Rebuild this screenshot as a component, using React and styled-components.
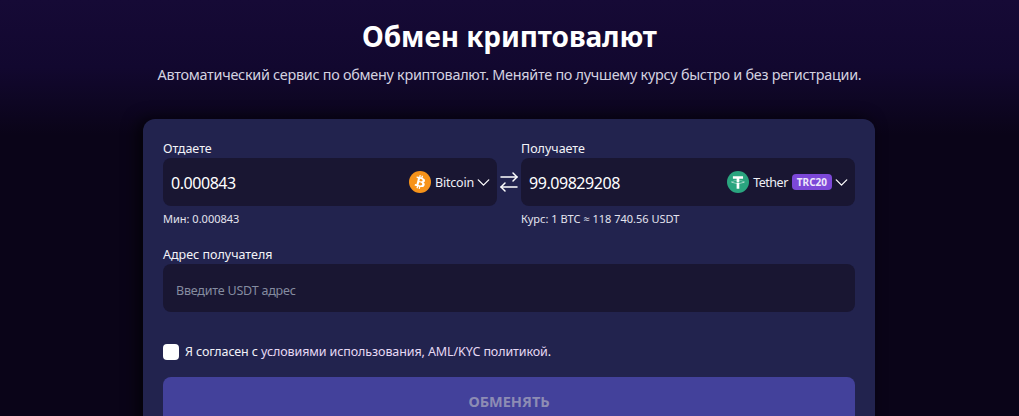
import React from "react"
import styled, { createGlobalStyle } from "styled-components"
import { ArrowRightLeft, ChevronDown } from "lucide-react"

const GlobalStyle = createGlobalStyle`
  html, body {
    margin: 0;
    padding: 0;
    background: #0a0418;
    overflow: hidden;
  }
  * {
    box-sizing: border-box;
  }
`

const Page = styled.main`
  height: 416px;
  overflow: hidden;
  padding-top: 17px;
  font-family: "Noto Sans", "Open Sans", sans-serif;
  color: #fff;
  background: linear-gradient(180deg, #160a36 0%, #12082f 50%, #0a0418 100%) no-repeat;
  background-size: 100% 135px;
`
const Title = styled.h1`
  margin: 0;
  font-size: 28px;
  line-height: 38px;
  font-weight: 700;
  letter-spacing: -0.1px;
  text-align: center;
`
const Subtitle = styled.p`
  margin: 9px 0 0;
  font-size: 14.4px;
  line-height: 22px;
  letter-spacing: -0.27px;
  color: #d4d2e0;
  text-align: center;
`
const Card = styled.section`
  width: 732px;
  margin: 33px 0 0 143px;
  padding: 20px;
  border-radius: 12px;
  background: #22234e;
  box-shadow: -5px 0 16px rgba(0, 0, 0, 0.7);
`
const ExchangeRow = styled.div`
  display: grid;
  grid-template-columns: 334px 24px 334px;
`
const Label = styled.label`
  display: block;
  font-size: 12.5px;
  line-height: ${(p) => (p.$compact ? "18px" : "19px")};
  color: #f3f3f8;
`
const Field = styled.div`
  height: 48px;
  display: flex;
  align-items: center;
  padding: 0 3px 0 8px;
  border-radius: 8px;
  background: #191632;
`
const Amount = styled.span`
  flex: 1;
  padding-top: 1px;
  font-size: 16px;
  letter-spacing: -0.45px;
  color: #fff;
`
const CoinName = styled.span`
  margin-left: 4px;
  font-size: 12.5px;
  letter-spacing: ${(p) => (p.$tight ? "-0.5px" : "-0.2px")};
  color: #f0f0f6;
`
const Badge = styled.span`
  margin-left: 4px;
  padding: 0 5px;
  height: 16px;
  display: flex;
  align-items: center;
  border-radius: 4px;
  background: #7c48d8;
  font-size: 10px;
  font-weight: 700;
  color: #ece6fa;
`
const Chevron = styled(ChevronDown)`
  margin-left: -1px;
  color: #fff;
`
const Hint = styled.div`
  margin-top: 4px;
  font-size: 11px;
  line-height: 18px;
  color: #e4e4ee;
`
const SwapButton = styled.div`
  height: 48px;
  margin-top: 19px;
  display: flex;
  align-items: center;
  justify-content: center;
  color: #fff;
`
const AddressBlock = styled.div`
  margin-top: 18px;
`
const AddressInput = styled.div`
  height: 48px;
  display: flex;
  align-items: center;
  padding: 4px 13px 0;
  border-radius: 8px;
  background: #191632;
  font-size: 12.5px;
  letter-spacing: -0.2px;
  color: #858ca0;
`
const Agreement = styled.div`
  margin-top: 32px;
  display: flex;
  align-items: center;
  gap: 6px;
  font-size: 12.5px;
  line-height: 16px;
  letter-spacing: -0.1px;
  color: #f0f0f6;
`
const Checkbox = styled.span`
  width: 16px;
  height: 16px;
  border-radius: 4px;
  background: #fff;
`
const TermsLink = styled.span`
  color: #e6d9f4;
`
const SubmitButton = styled.div`
  margin-top: 17px;
  height: 48px;
  display: flex;
  align-items: center;
  justify-content: center;
  border-radius: 8px;
  background: #43419b;
  font-size: 14.5px;
  font-weight: 700;
  color: #8d8cb4;
`

function BitcoinIcon() {
  return (
    <svg width="22" height="22" viewBox="0 0 32 32" aria-hidden="true">
      <circle cx="16" cy="16" r="16" fill="#f7931a" />
      <path
        fill="#fff"
        d="M23.19 14.02c.31-2.12-1.3-3.26-3.5-4.02l.72-2.87-1.75-.44-.69 2.8c-.46-.12-.93-.22-1.4-.33l.7-2.81-1.75-.44-.71 2.87c-.38-.09-.75-.17-1.12-.26l-2.41-.6-.46 1.87s1.3.3 1.27.31c.71.18.84.65.82 1.02l-.82 3.27-1.14 4.59c-.09.21-.31.53-.8.41.02.03-1.27-.32-1.27-.32l-.87 2 2.28.57c.42.11.84.22 1.25.32l-.72 2.9 1.75.44.72-2.87c.48.13.94.25 1.39.36l-.71 2.86 1.75.44.72-2.9c2.99.57 5.24.34 6.18-2.36.76-2.18-.04-3.43-1.61-4.25 1.15-.26 2.01-1.02 2.24-2.57zm-4 5.62c-.54 2.18-4.2 1-5.39.7l.96-3.86c1.19.3 4.99.88 4.43 3.16zm.54-5.65c-.49 1.98-3.54.97-4.53.73l.87-3.5c.99.25 4.18.71 3.66 2.77z"
      />
    </svg>
  )
}

function TetherIcon() {
  return (
    <svg width="22" height="22" viewBox="0 0 32 32" aria-hidden="true">
      <circle cx="16" cy="16" r="16" fill="#2aa57f" />
      <path
        fill="#fff"
        d="M17.92 17.38v-.01c-.11.01-.68.04-1.95.04-1.01 0-1.73-.03-1.98-.04v.01c-3.89-.17-6.79-.85-6.79-1.66s2.9-1.49 6.79-1.66v2.65c.25.02.98.06 1.99.06 1.21 0 1.82-.05 1.94-.06v-2.65c3.88.17 6.77.85 6.77 1.66s-2.89 1.49-6.77 1.66m0-3.59V11.4h5.41V7.8H8.59v3.6h5.4v2.39c-4.4.2-7.7 1.07-7.7 2.11s3.3 1.91 7.7 2.11v7.67h3.93v-7.67c4.39-.2 7.69-1.07 7.69-2.11s-3.3-1.91-7.69-2.11"
      />
    </svg>
  )
}

export default function App() {
  return (
    <Page>
      <GlobalStyle />
      <Title>Обмен криптовалют</Title>
      <Subtitle>
        Автоматический сервис по обмену криптовалют. Меняйте по лучшему курсу быстро и без регистрации.
      </Subtitle>
      <Card>
        <ExchangeRow>
          <div>
            <Label>Отдаете</Label>
            <Field>
              <Amount>0.000843</Amount>
              <BitcoinIcon />
              <CoinName>Bitcoin</CoinName>
              <Chevron size={21} strokeWidth={1.5} />
            </Field>
            <Hint>Мин: 0.000843</Hint>
          </div>
          <SwapButton>
            <ArrowRightLeft size={26} strokeWidth={1.5} />
          </SwapButton>
          <div>
            <Label>Получаете</Label>
            <Field>
              <Amount>99.09829208</Amount>
              <TetherIcon />
              <CoinName $tight>Tether</CoinName>
              <Badge>TRC20</Badge>
              <Chevron size={21} strokeWidth={1.5} />
            </Field>
            <Hint>Курс: 1 BTC ≈ 118 740.56 USDT</Hint>
          </div>
        </ExchangeRow>
        <AddressBlock>
          <Label $compact>Адрес получателя</Label>
          <AddressInput>Введите USDT адрес</AddressInput>
        </AddressBlock>
        <Agreement>
          <Checkbox />
          <span>
            Я согласен с <TermsLink>условиями использования, AML/KYC политикой</TermsLink>.
          </span>
        </Agreement>
        <SubmitButton>ОБМЕНЯТЬ</SubmitButton>
      </Card>
    </Page>
  )
}
